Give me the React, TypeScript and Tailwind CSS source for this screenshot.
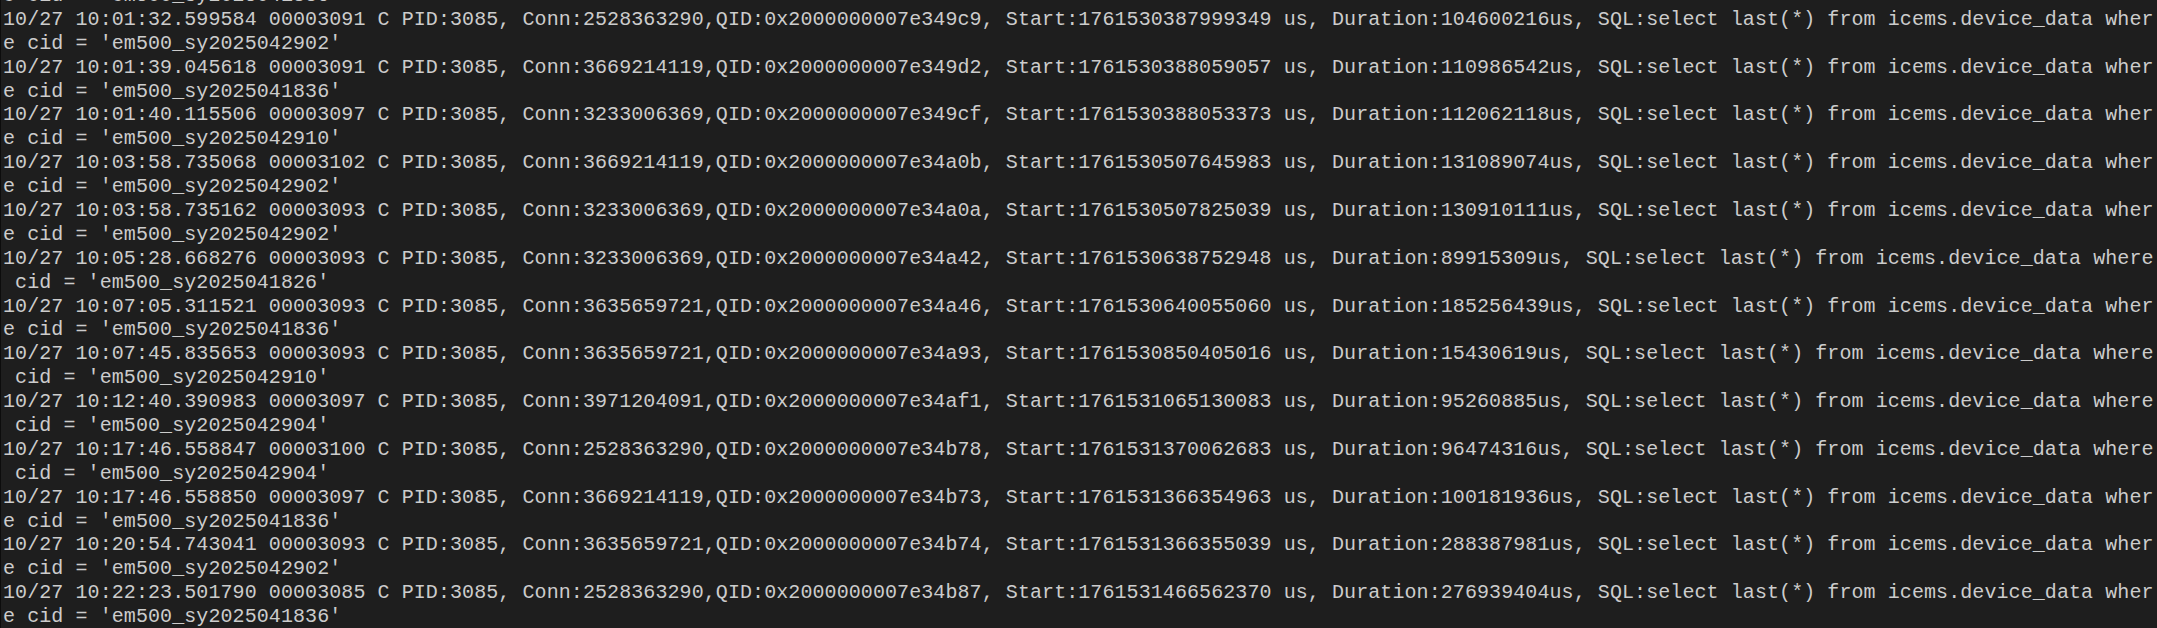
type LogRow = {
  ts: string;
  tid: string;
  conn: string;
  qid: string;
  start: string;
  dur: string;
  cid: string;
};

const rows: LogRow[] = [
  { ts: "10:01:32.599584", tid: "00003091", conn: "2528363290", qid: "349c9", start: "1761530387999349", dur: "104600216", cid: "em500_sy2025042902" },
  { ts: "10:01:39.045618", tid: "00003091", conn: "3669214119", qid: "349d2", start: "1761530388059057", dur: "110986542", cid: "em500_sy2025041836" },
  { ts: "10:01:40.115506", tid: "00003097", conn: "3233006369", qid: "349cf", start: "1761530388053373", dur: "112062118", cid: "em500_sy2025042910" },
  { ts: "10:03:58.735068", tid: "00003102", conn: "3669214119", qid: "34a0b", start: "1761530507645983", dur: "131089074", cid: "em500_sy2025042902" },
  { ts: "10:03:58.735162", tid: "00003093", conn: "3233006369", qid: "34a0a", start: "1761530507825039", dur: "130910111", cid: "em500_sy2025042902" },
  { ts: "10:05:28.668276", tid: "00003093", conn: "3233006369", qid: "34a42", start: "1761530638752948", dur: "89915309", cid: "em500_sy2025041826" },
  { ts: "10:07:05.311521", tid: "00003093", conn: "3635659721", qid: "34a46", start: "1761530640055060", dur: "185256439", cid: "em500_sy2025041836" },
  { ts: "10:07:45.835653", tid: "00003093", conn: "3635659721", qid: "34a93", start: "1761530850405016", dur: "15430619", cid: "em500_sy2025042910" },
  { ts: "10:12:40.390983", tid: "00003097", conn: "3971204091", qid: "34af1", start: "1761531065130083", dur: "95260885", cid: "em500_sy2025042904" },
  { ts: "10:17:46.558847", tid: "00003100", conn: "2528363290", qid: "34b78", start: "1761531370062683", dur: "96474316", cid: "em500_sy2025042904" },
  { ts: "10:17:46.558850", tid: "00003097", conn: "3669214119", qid: "34b73", start: "1761531366354963", dur: "100181936", cid: "em500_sy2025041836" },
  { ts: "10:20:54.743041", tid: "00003093", conn: "3635659721", qid: "34b74", start: "1761531366355039", dur: "288387981", cid: "em500_sy2025042902" },
  { ts: "10:22:23.501790", tid: "00003085", conn: "2528363290", qid: "34b87", start: "1761531466562370", dur: "276939404", cid: "em500_sy2025041836" },
];

const COLS = 178;

// terminal wraps at a fixed column count, so split the full record the same way
function wrap(r: LogRow): string[] {
  const full = `10/27 ${r.ts} ${r.tid} C PID:3085, Conn:${r.conn},QID:0x2000000007e${r.qid}, Start:${r.start} us, Duration:${r.dur}us, SQL:select last(*) from icems.device_data where cid = '${r.cid}'`;
  const out: string[] = [];
  for (let i = 0; i < full.length; i += COLS) out.push(full.slice(i, i + COLS));
  return out;
}

export default function App() {
  const lines = ["e cid = 'em500_sy2025041836'", ...rows.flatMap(wrap)];

  return (
    <div className="w-[2157px] h-[628px] overflow-hidden bg-[#1e1e1e] border-l border-[#0c0c0c]">
      <div
        className="-mt-[16px] pl-[2px] text-[20px] leading-[23.9px] tracking-[0.08px] text-[#cccccc]"
        style={{ fontFamily: '"Liberation Mono", "DejaVu Sans Mono", monospace' }}
      >
        {lines.map((l, i) => (
          <div key={i} className="whitespace-pre h-[23.9px]">
            {l}
          </div>
        ))}
      </div>
    </div>
  );
}
